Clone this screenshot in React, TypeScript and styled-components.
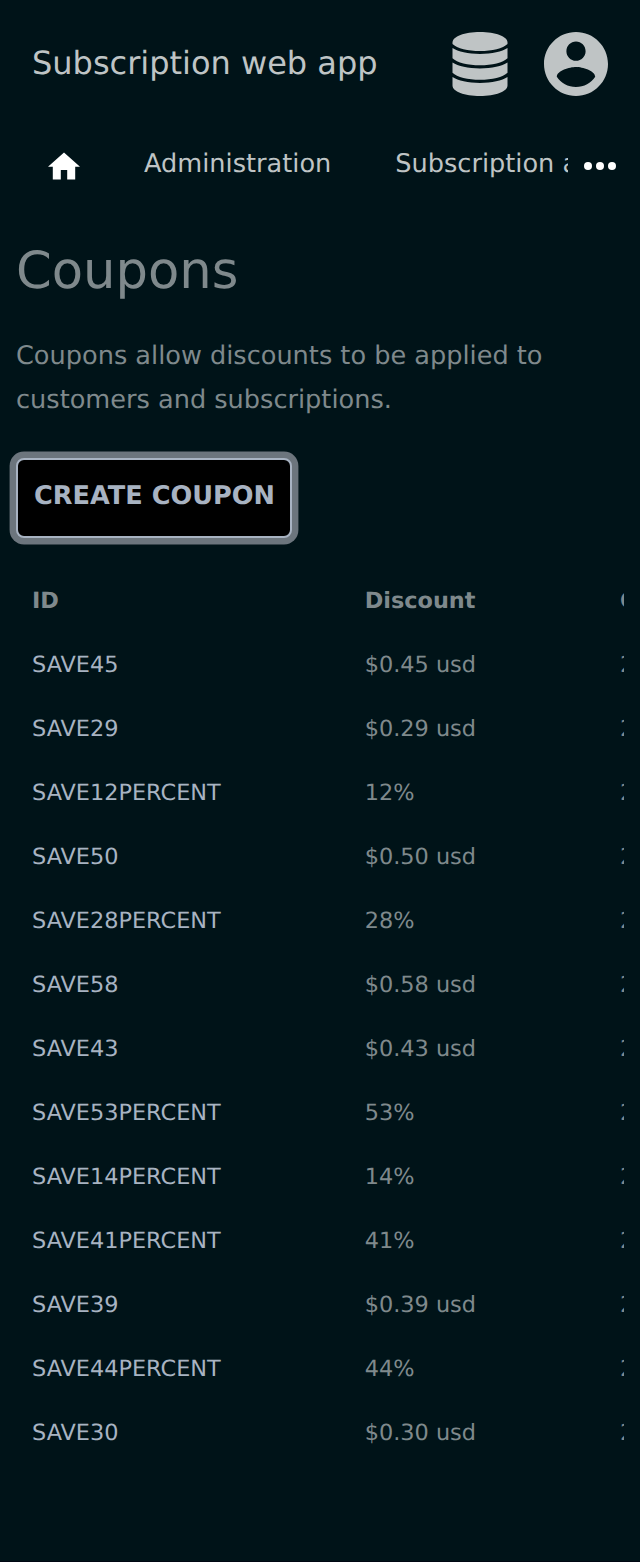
import React from 'react';
import styled, { createGlobalStyle } from 'styled-components';

const Global = createGlobalStyle`
  * { box-sizing: border-box; }
  body { margin: 0; background: #001318; font-family: "DejaVu Sans", sans-serif; color: #7f898c; text-rendering: geometricPrecision; }
`;
const Page = styled.div`min-height: 1562px; overflow: hidden; background: #001318; border-bottom: 1px solid #000712;`;
const Header = styled.header`
  height: 128px; padding: 0 32px; display: flex; align-items: center; gap: 36px; color: #bfc4c5;
`;
const Title = styled.div`flex: 1; font-size: 32px; line-height: 44px; white-space: nowrap; padding-bottom: 2px;`;
const Icon = styled.svg<{ $w: number }>`width: ${p => p.$w}px; height: 64px; display: block;`;
const Nav = styled.nav`height: 76px; display: flex; align-items: center; padding: 0 24px 0 48px; color: #bfc4c5;`;
const Links = styled.div`
  width: 424px; margin-left: 64px; display: flex; gap: 64px; overflow: hidden; white-space: nowrap;
  font-size: 25.6px; line-height: 40px; padding-bottom: 4px;
`;
const More = styled.svg`width: 32px; height: 32px; margin-left: 16px;`;
const HomeIcon = styled.svg`width: 32px; height: 32px; flex: none;`;
const Main = styled.main`padding: 35px 16px 0;`;
const Heading = styled.h1`margin: 0; font-size: 51.2px; line-height: 64px; font-weight: 400;`;
const Lead = styled.p`margin: 31px 0 0; font-size: 25.6px; line-height: 44px;`;
const Create = styled.button`
  display: block; margin-top: 36px; width: 276px; height: 80px; padding: 0 0 4px 1px; border: 2px solid #a8b3c2; border-radius: 8px;
  background: #000; box-shadow: 0 0 0 6.4px #6c757d; color: #a8b3c2; font: bold 25.6px "DejaVu Sans", sans-serif; white-space: nowrap;
  text-rendering: inherit;
`;
const Table = styled.div`margin-top: 31px; overflow: hidden; font-size: 22.4px;`;
const Row = styled.div<{ $head?: boolean }>`
  width: 1000px; height: 64px; padding: 0 16px; display: grid; grid-template-columns: 332.7px 255.3px 300px; align-items: center;
  font-weight: ${p => (p.$head ? 700 : 400)};
`;
const Code = styled.span`color: #a8b3c2;`;

const coupons = [
  ['SAVE45', '$0.45 usd'], ['SAVE29', '$0.29 usd'], ['SAVE12PERCENT', '12%'], ['SAVE50', '$0.50 usd'],
  ['SAVE28PERCENT', '28%'], ['SAVE58', '$0.58 usd'], ['SAVE43', '$0.43 usd'], ['SAVE53PERCENT', '53%'],
  ['SAVE14PERCENT', '14%'], ['SAVE41PERCENT', '41%'], ['SAVE39', '$0.39 usd'], ['SAVE44PERCENT', '44%'],
  ['SAVE30', '$0.30 usd'],
];

export default function App() {
  return (
    <Page>
      <Global />
      <Header>
        <Title>Subscription web app</Title>
        <Icon $w={56} viewBox="0 0 56 64" fill="currentColor">
          <path d="M.5 10.500C.5 4.500 12.500 0 28 0s27.500 4.500 27.500 10.500v1.500C51 16.500 40 19 28 19S5 16.500 .5 12z" />
          <path d="M.5 16C6 19.800 16 21.900 28 21.900S50 19.800 55.500 16v10.300C51 30.800 40 33.300 28 33.300S5 30.800 .5 26.300z" />
          <path d="M.5 30.500C6 34.300 16 36.400 28 36.400s22-2.100 27.500-5.900v10.300C51 45.300 40 47.800 28 47.800S5 45.300 .5 40.800z" />
          <path d="M.5 45C6 48.800 16 50.900 28 50.900S50 48.800 55.500 45v8.500C55.500 59.500 43.500 64 28 64S.5 59.500 .5 53.500z" />
        </Icon>
        <Icon $w={64} viewBox="2 2 20 20" fill="currentColor">
          <path d="M12 2C6.48 2 2 6.48 2 12s4.480 10 10 10 10-4.480 10-10S17.520 2 12 2zm0 3c1.660 0 3 1.340 3 3s-1.340 3-3 3-3-1.340-3-3 1.340-3 3-3zm0 14.200c-2.500 0-4.710-1.280-6-3.220.030-1.990 4-3.080 6-3.080 1.990 0 5.970 1.090 6 3.080-1.290 1.940-3.500 3.220-6 3.220z" />
        </Icon>
      </Header>
      <Nav>
        <HomeIcon viewBox="2 1.500 20 20" fill="#fff"><path d="M10 20v-6h4v6h5v-8h3L12 3 2 12h3v8z" /></HomeIcon>
        <Links><span>Administration</span><span>Subscription administration</span></Links>
        <More viewBox="0 0 32 32" fill="#fff"><circle cx="4" cy="16" r="4" /><circle cx="16" cy="16" r="4" /><circle cx="28" cy="16" r="4" /></More>
      </Nav>
      <Main>
        <Heading>Coupons</Heading>
        <Lead>Coupons allow discounts to be applied to customers and subscriptions.</Lead>
        <Create>CREATE COUPON</Create>
        <Table>
          <Row $head><span>ID</span><span>Discount</span><span>Created</span></Row>
          {coupons.map(([id, discount]) => (
            <Row key={id}><Code>{id}</Code><span>{discount}</span><span>2023-01-01</span></Row>
          ))}
        </Table>
      </Main>
    </Page>
  );
}
